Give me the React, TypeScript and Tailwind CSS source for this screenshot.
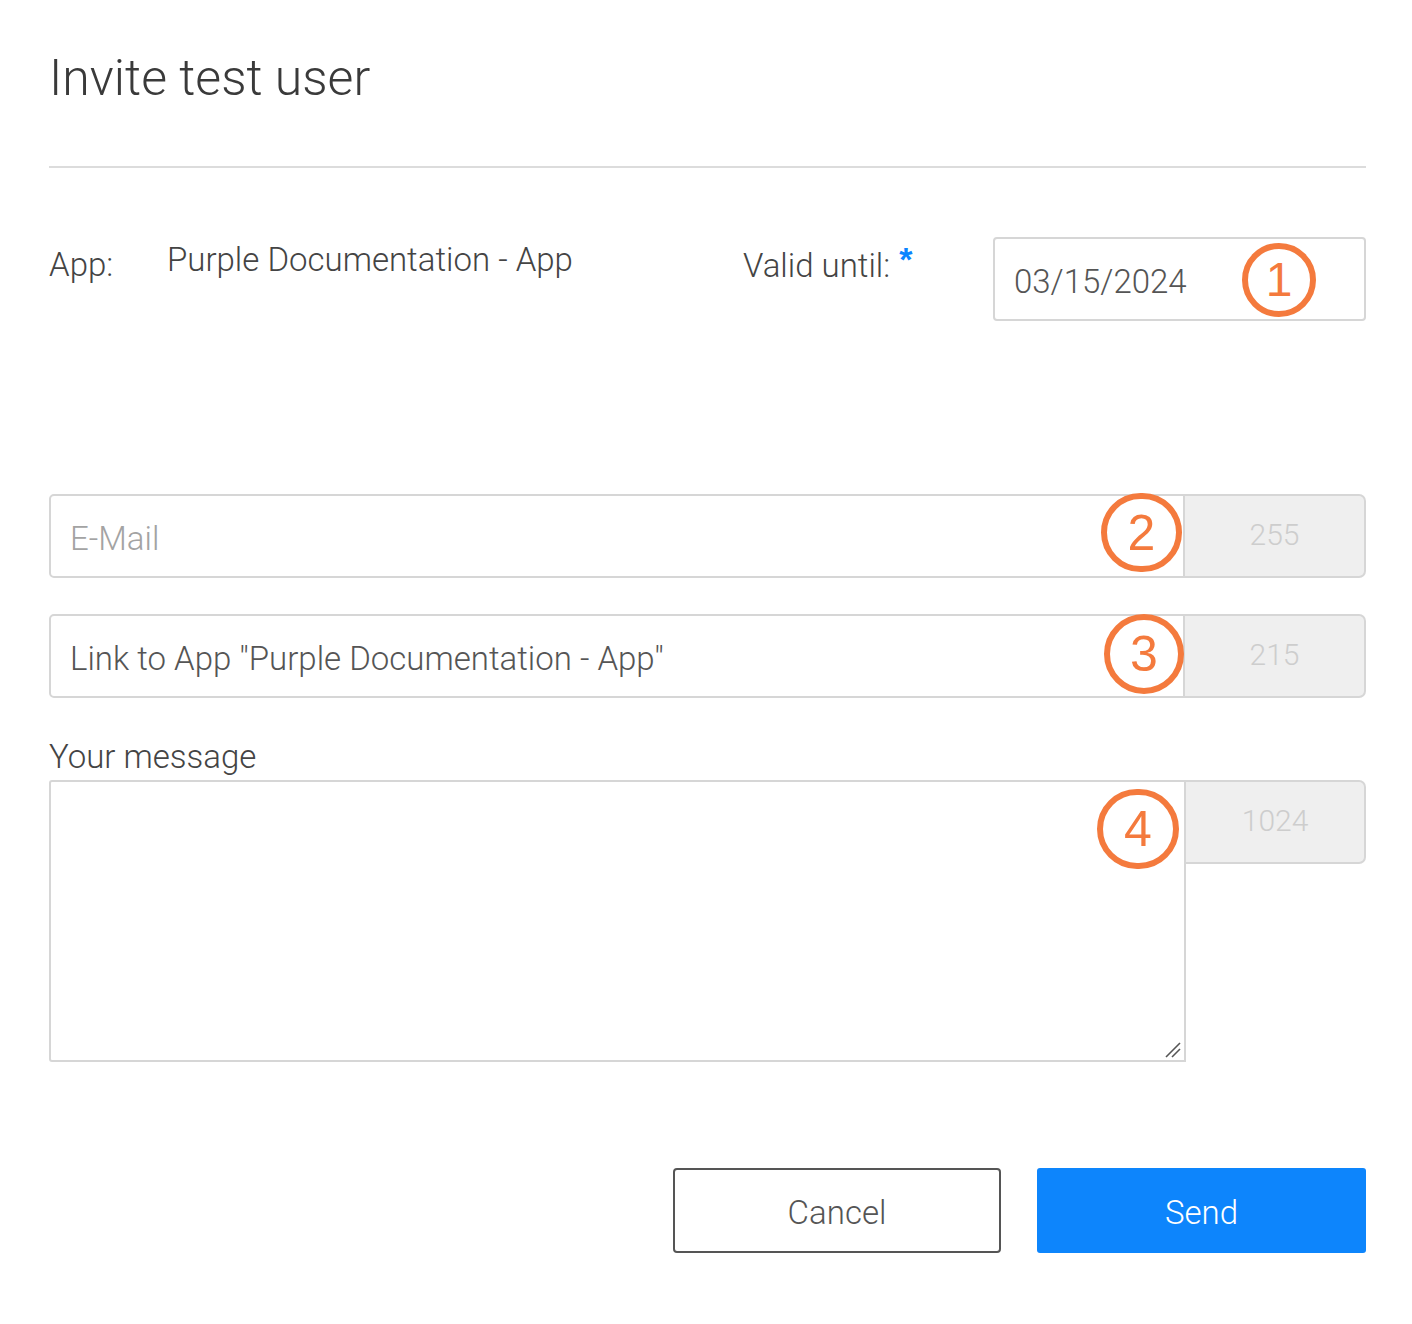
import { useState } from 'react'

function Marker({ n, className }: { n: number; className: string }) {
  return (
    <div
      className={`absolute flex items-center justify-center rounded-full border-[6px] border-[#f47a3d] text-[#f47a3d] font-['Liberation_Sans',Arial,sans-serif] leading-none pointer-events-none ${className}`}
    >
      {n}
    </div>
  )
}

function CounterInput({
  placeholder,
  value,
  counter,
  marker,
}: {
  placeholder: string
  value?: string
  counter: number
  marker: React.ReactNode
}) {
  const [text, setText] = useState(value ?? '')
  return (
    <div className="relative flex h-[84px]">
      <input
        type="text"
        value={text}
        onChange={(e) => setText(e.target.value)}
        placeholder={placeholder}
        className="flex-1 min-w-0 border-2 border-[#d6d6d6] rounded-l-[5px] px-[19px] pt-[5px] text-[33px] text-[#555] placeholder:text-[#a3a3a3] outline-none bg-white"
      />
      <div className="w-[181px] flex items-center justify-center pb-[3px] bg-[#efefef] border-2 border-l-0 border-[#d6d6d6] rounded-r-[7px] text-[30px] text-[#cdcdcd]">
        {counter}
      </div>
      {marker}
    </div>
  )
}

export default function App() {
  const [message, setMessage] = useState('')

  return (
    <div className="min-h-[1324px] bg-white pl-[49px] pr-[46px] font-['Roboto',sans-serif] font-light text-[#444]">
      <h1 className="pt-[50px] text-[50px] leading-[57px] text-[#3a3a3a] font-light">Invite test user</h1>

      <div className="mt-[59px] h-[2px] bg-[#dcdcdc]" />

      <div className="relative mt-[69px] flex items-start h-[84px]">
        <div className="w-[118px] mt-[9px] text-[33px] leading-[38px]">App:</div>
        <div className="w-[576px] mt-[4px] text-[33px] leading-[38px]">Purple Documentation - App</div>
        <div className="w-[250px] mt-[10px] text-[33px] leading-[38px] flex items-start">
          Valid until:
          <span className="ml-[9px] -mt-[7px] text-[34px] font-bold text-[#0a84ff] font-['Liberation_Sans',sans-serif]">*</span>
        </div>
        <input
          type="text"
          defaultValue="03/15/2024"
          className="flex-1 min-w-0 h-[84px] border-2 border-[#d6d6d6] rounded-[4px] px-[19px] pt-[4px] text-[33px] text-[#555] outline-none"
        />
        <Marker n={1} className="left-[1193px] top-[6px] w-[74px] h-[74px] text-[48px]" />
      </div>

      <div className="mt-[173px]">
        <CounterInput
          placeholder="E-Mail"
          counter={255}
          marker={<Marker n={2} className="left-[1052px] -top-[1px] w-[81px] h-[79px] text-[50px]" />}
        />
      </div>

      <div className="mt-[36px]">
        <CounterInput
          placeholder=""
          value={'Link to App "Purple Documentation - App"'}
          counter={215}
          marker={<Marker n={3} className="left-[1055px] top-[0px] w-[80px] h-[80px] text-[50px]" />}
        />
      </div>

      <div className="mt-[40px] text-[33px] leading-[38px] text-[#444]">Your message</div>

      <div className="relative mt-[4px] flex items-start">
        <textarea
          value={message}
          onChange={(e) => setMessage(e.target.value)}
          className="w-[1138px] h-[282px] border-2 border-[#d6d6d6] rounded-l-[3px] p-[19px] text-[28px] outline-none resize-none"
        />
        <svg
          className="absolute left-[1114px] top-[260px] pointer-events-none"
          width="20"
          height="20"
          viewBox="0 0 20 20"
        >
          <line x1="3" y1="17" x2="17" y2="3" stroke="#555" strokeWidth="1.6" />
          <line x1="9" y1="17" x2="17" y2="9" stroke="#555" strokeWidth="1.6" />
        </svg>
        <div className="w-[180px] h-[84px] flex items-center justify-center pb-[3px] bg-[#efefef] border-2 border-l-0 border-[#d6d6d6] rounded-r-[7px] text-[30px] text-[#cdcdcd]">
          1024
        </div>
        <Marker n={4} className="left-[1048px] top-[9px] w-[82px] h-[80px] text-[50px]" />
      </div>

      <div className="mt-[106px] flex justify-end gap-[36px]">
        <button className="w-[328px] h-[85px] border-2 border-[#555] rounded-[4px] bg-white pt-[4px] text-[33px] text-[#555]">
          Cancel
        </button>
        <button className="w-[329px] h-[85px] rounded-[3px] bg-[#0d85fc] pt-[4px] text-[33px] text-white">
          Send
        </button>
      </div>
    </div>
  )
}
